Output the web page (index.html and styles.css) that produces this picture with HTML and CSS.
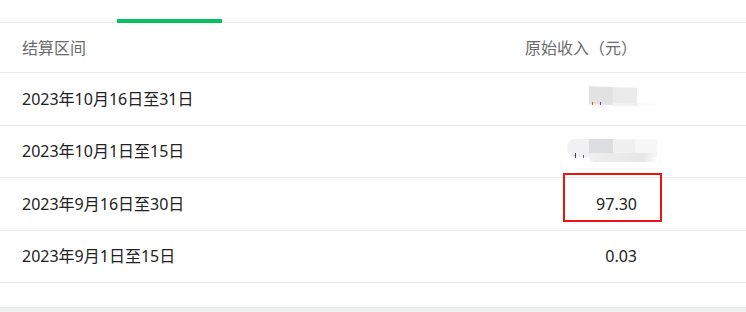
FILE: index.html
```html
<!DOCTYPE html>
<html lang="zh-CN">
<head>
<meta charset="utf-8">
<link rel="stylesheet" href="styles.css">
</head>
<body>
<div class="page">
  <div class="tabs">
    <div class="tab-indicator"></div>
  </div>
  <div class="table">
    <div class="row head">
      <div class="cell period">结算区间</div>
      <div class="cell amount">原始收入（元）</div>
    </div>
    <div class="row">
      <div class="cell period">2023年10月16日至31日</div>
      <div class="cell amount"><span class="mask mask-a"><i class="mk m1"></i><i class="mk m2"></i></span></div>
    </div>
    <div class="row">
      <div class="cell period">2023年10月1日至15日</div>
      <div class="cell amount"><span class="mask mask-b"><i class="mk m3"></i><i class="mk m4"></i></span></div>
    </div>
    <div class="row">
      <div class="cell period">2023年9月16日至30日</div>
      <div class="cell amount">97.30</div>
    </div>
    <div class="row">
      <div class="cell period">2023年9月1日至15日</div>
      <div class="cell amount">0.03</div>
    </div>
    <div class="spacer"></div>
  </div>
  <div class="footer-band"></div>
  <div class="highlight"></div>
</div>
</body>
</html>
```
FILE: styles.css
```css
html, body {
  margin: 0;
  padding: 0;
  background: #ffffff;
}
body {
  font-family: "Noto Sans", "Noto Sans CJK SC", sans-serif;
  font-size: 16px;
  color: #222222;
  width: 746px;
  height: 312px;
  overflow: hidden;
}
.page {
  position: relative;
  width: 746px;
  height: 312px;
}
.tabs {
  height: 22px;
  border-bottom: 1px solid #ebebeb;
  position: relative;
}
.tab-indicator {
  position: absolute;
  left: 117px;
  width: 105px;
  bottom: -1px;
  height: 4px;
  background: #07c160;
}
.row {
  display: flex;
  align-items: center;
  height: 52.5px;
  box-sizing: border-box;
  border-bottom: 1px solid #e9e9e9;
}
.row.head {
  height: 50px;
  color: #6b6b6b;
}
.cell {
  line-height: 24px;
}
.period {
  padding-left: 22px;
  flex: 1;
}
.amount {
  width: 300px;
  padding-right: 109px;
  text-align: right;
  display: flex;
  justify-content: flex-end;
}
.spacer {
  height: 24px;
  border-bottom: 1px solid #e9e9e9;
}
.footer-band {
  height: 6px;
  background: #eef0f0;
}
.mask {
  position: relative;
  display: block;
  height: 24px;
}
.mask-a {
  width: 48px;
}
.mask-a::before {
  content: "";
  position: absolute;
  left: 0;
  top: 0;
  width: 48px;
  height: 18px;
  background: linear-gradient(to right, #e2e2e2 50%, #ebebeb 50%);
  filter: blur(0.4px);
  transform: skewY(2deg);
}
.mask-a::after {
  content: "";
  position: absolute;
  left: 24px;
  top: 16px;
  width: 50px;
  height: 3px;
  background: linear-gradient(to right, #f2f2f2, rgba(255,255,255,0));
}
.mask-b {
  width: 70px;
  margin-right: -20px;
}
.mask-b::before {
  content: "";
  position: absolute;
  left: -20px;
  top: 0;
  width: 90px;
  height: 18px;
  border-radius: 8px 0 0 8px;
  background: linear-gradient(to right, #f1f1f2 0 24%, #dcdde0 24% 51%, #f0f0f1 51% 76%, #f7f7f7 76%);
  filter: blur(0.4px);
}
.mask-b::after {
  content: "";
  position: absolute;
  left: 2px;
  top: 14px;
  width: 68px;
  height: 9px;
  border-radius: 0 0 0 6px;
  background: linear-gradient(to right, #efeff0, #e6e6e6 80%, rgba(255,255,255,0));
  filter: blur(0.3px);
}
.mk {
  position: absolute;
  width: 1px;
  z-index: 1;
}
.m1 { left: 3px; top: 15px; height: 3px; background: #b0702a; }
.m2 { left: 11px; top: 15px; height: 3px; background: #5a4a8a; }
.m3 { left: -12px; top: 14px; height: 5px; background: #2a3a9a; }
.m4 { left: -4px; top: 16px; height: 3px; background: #6a6a8a; }
.highlight {
  position: absolute;
  left: 563px;
  top: 173px;
  width: 99px;
  height: 49px;
  box-sizing: border-box;
  border: 2px solid #e81515;
}
```
